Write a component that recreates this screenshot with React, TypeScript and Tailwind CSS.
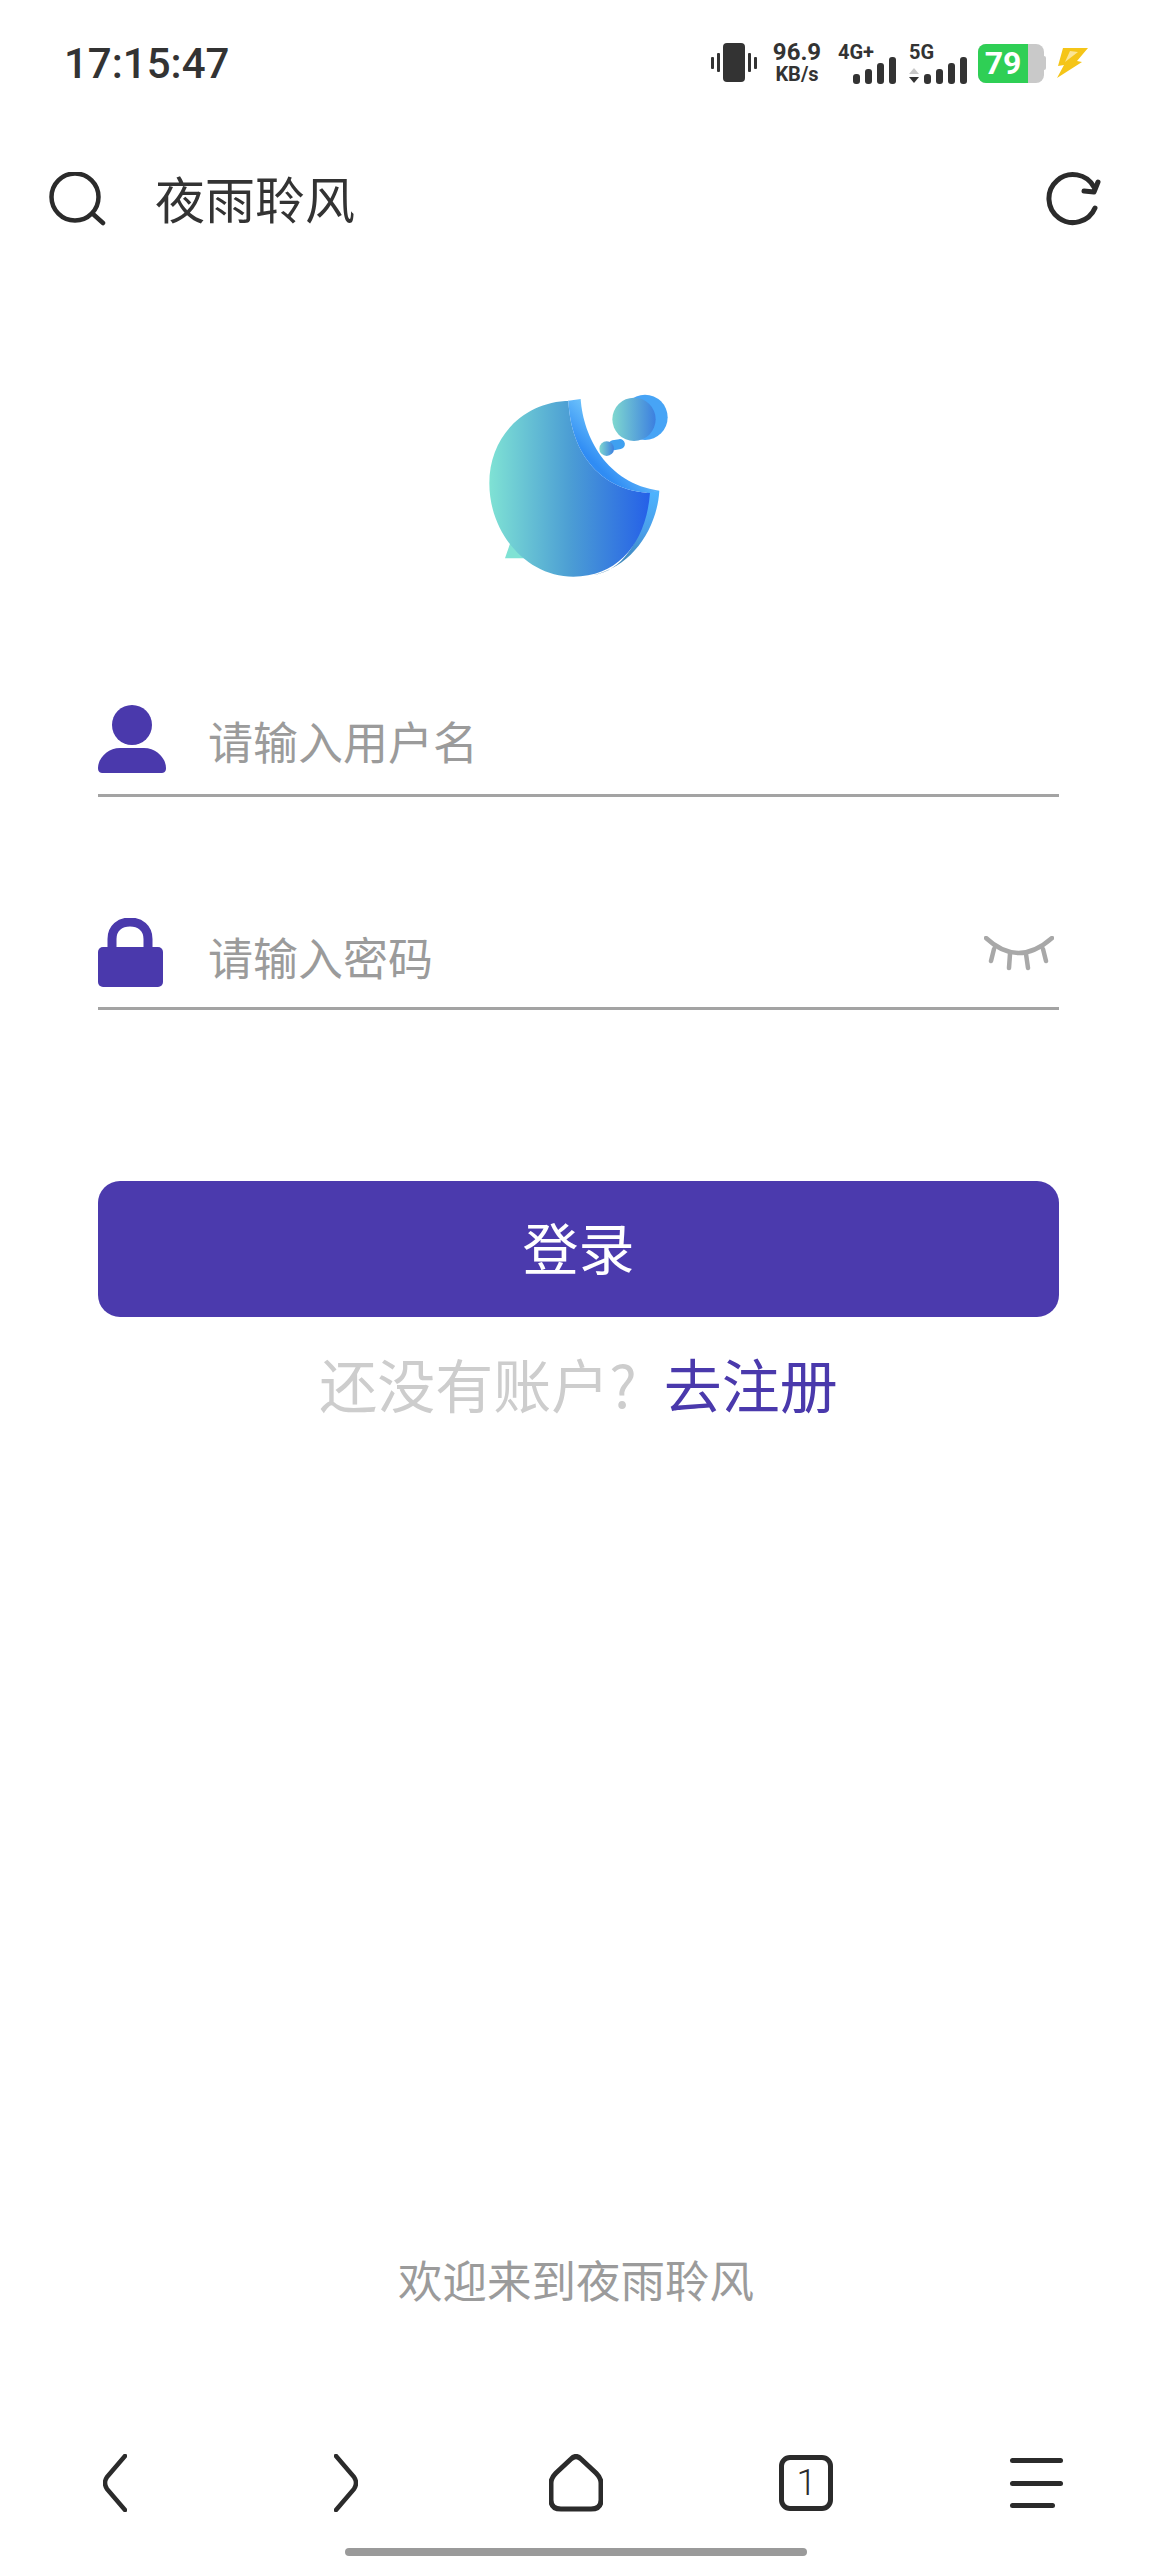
import React from 'react';

const FONT = { fontFamily: '"Noto Sans CJK SC", Roboto, sans-serif' };
const ROBOTO = { fontFamily: 'Roboto, sans-serif' };

const SignalBars = () => (
  <svg width="43" height="27" viewBox="0 0 43 27" fill="#333">
    <rect x="0" y="17" width="7" height="10" rx="3" />
    <rect x="12" y="12" width="7" height="15" rx="3" />
    <rect x="24" y="6" width="7" height="21" rx="3" />
    <rect x="36" y="0" width="7" height="27" rx="3" />
  </svg>
);

const StatusBar = () => (
  <div className="flex h-[126px] items-center justify-between pl-[64px] pr-[63px]">
    <span className="mt-[2px] text-[42px] leading-[48px] font-medium text-[#333]" style={ROBOTO}>17:15:47</span>
    <div className="flex items-center">
      <svg width="46" height="40" viewBox="0 0 46 40" fill="#333">
        <rect x="12" y="0" width="22" height="39" rx="4" />
        <rect x="0" y="14" width="3" height="12" rx="1" />
        <rect x="6" y="10" width="3" height="19" rx="1" />
        <rect x="37" y="10" width="3" height="19" rx="1" />
        <rect x="43" y="14" width="3" height="12" rx="1" />
      </svg>
      <div className="ml-[16px] flex w-[48px] flex-col items-center font-bold text-[#333]" style={ROBOTO}>
        <span className="text-[24px] leading-[22px]">96.9</span>
        <span className="text-[20px] leading-[22px]">KB/s</span>
      </div>
      <div className="relative ml-[17px] h-[42px] w-[58px] text-[#333]">
        <span className="absolute left-0 top-0 text-[20px] leading-[20px] font-bold" style={ROBOTO}>4G+</span>
        <div className="absolute right-0 bottom-0 flex"><SignalBars /></div>
      </div>
      <div className="relative ml-[13px] h-[42px] w-[58px] text-[#333]">
        <span className="absolute left-0 top-0 text-[20px] leading-[20px] font-bold" style={ROBOTO}>5G</span>
        <svg className="absolute left-0 bottom-0" width="10" height="16" viewBox="0 0 10 16">
          <path d="M5 0 L10 6 H0 Z" fill="#c8c8c8" />
          <path d="M5 15 L10 9 H0 Z" fill="#333" />
        </svg>
        <div className="absolute right-0 bottom-0 flex"><SignalBars /></div>
      </div>
      <div className="ml-[11px] flex items-center">
        <div className="h-[39px] w-[66px] overflow-hidden rounded-[8px] bg-[#c9c9c9]">
          <div className="flex h-full w-[50px] items-center justify-center bg-[#2fcf55] text-[32px] leading-none font-bold text-white" style={ROBOTO}>79</div>
        </div>
        <div className="h-[14px] w-[2px] rounded-r-sm bg-[#c9c9c9]" />
      </div>
      <svg className="ml-[11px]" width="32" height="34" viewBox="0 0 32 32" fill="#f5c518">
        <path d="M6 1 H31 L20 14 L25 15 L0 31 L7 18 L1 19 Z" />
        <path d="M13 4 L8 15 L21 5 Z" fill="#fff" opacity="0.55" />
      </svg>
    </div>
  </div>
);

const TopBar = () => (
  <div className="mt-[43px] flex h-[60px] items-center justify-between pl-[48px] pr-[50px]">
    <div className="flex items-center">
      <svg width="58" height="54" viewBox="0 0 58 54" fill="none" stroke="#2b2b2b" strokeWidth="4.5" strokeLinecap="round">
        <circle cx="27" cy="25" r="23.5" />
        <path d="M45 42 L55 51" />
      </svg>
      <span className="mb-[4px] ml-[49px] text-[50px] leading-[60px] text-[#333]">夜雨聆风</span>
    </div>
    <svg width="58" height="56" viewBox="0 0 58 56" fill="none" stroke="#2b2b2b" strokeWidth="5" strokeLinecap="round" strokeLinejoin="round">
      <path d="M51 37 A24 24 0 1 1 50 16" />
      <path d="M54 11 L50 21 L40 20" />
    </svg>
  </div>
);

const Logo = () => (
  <svg width="220" height="220" viewBox="0 0 660 660">
    <defs>
      <linearGradient id="body" x1="0" y1="0" x2="1" y2="0">
        <stop offset="0" stopColor="#7fe2d4" />
        <stop offset="0.5" stopColor="#4c9ed4" />
        <stop offset="1" stopColor="#2560e8" />
      </linearGradient>
      <linearGradient id="rim" x1="1" y1="0" x2="0" y2="1">
        <stop offset="0.3" stopColor="#8adcff" />
        <stop offset="0.7" stopColor="#2f8cf4" />
      </linearGradient>
      <linearGradient id="edge" x1="0" y1="0" x2="0" y2="1">
        <stop offset="0" stopColor="#4eb4ff" />
        <stop offset="0.5" stopColor="#4a9ee8" />
        <stop offset="1" stopColor="#3a7fa8" />
      </linearGradient>
      <linearGradient id="dot" x1="0" y1="0" x2="1" y2="0">
        <stop offset="0" stopColor="#7fd8cf" />
        <stop offset="1" stopColor="#3c7fe0" />
      </linearGradient>
    </defs>
    <path d="M135 565 L152 515 L205 565 Z" fill="#7fe2d4" />
    <path d="M560 366 L598 362 C592 470 520 590 400 615 C 500 600 555 490 560 366 Z" fill="url(#edge)" />
    <path d="M330 92 C190 95 88 200 88 340 C88 490 200 620 340 620 C480 620 560 510 570 368 C450 365 335 280 325 92 Z" fill="url(#body)" />
    <path d="M325 92 L362 87 C370 200 440 340 598 362 L570 368 C450 365 335 280 325 92 Z" fill="url(#rim)" />
    <circle cx="555" cy="142" r="68" fill="#47a4f6" />
    <circle cx="522" cy="148" r="65" fill="url(#dot)" />
    <rect x="445" y="209" width="50" height="30" rx="15" transform="rotate(-10 470 225)" fill="#3fa0f0" />
    <circle cx="440" cy="236" r="22" fill="url(#dot)" />
  </svg>
);

const Field = ({ icon, placeholder, trailing, className, textClass }: { icon: React.ReactNode; placeholder: string; trailing?: React.ReactNode; className?: string; textClass?: string }) => (
  <div className={`flex h-[92px] items-start border-b-[3px] border-[#a3a3a3] ${className ?? ''}`}>
    <div className="flex h-[68px] w-[110px] shrink-0 items-center">{icon}</div>
    <span className={`flex-1 text-[45px] leading-[60px] text-[#9b9b9b] ${textClass ?? ''}`}>{placeholder}</span>
    {trailing}
  </div>
);

const UserIcon = () => (
  <svg width="68" height="68" viewBox="0 0 68 68" fill="#4a39ac">
    <circle cx="34" cy="20" r="20" />
    <path d="M0 63 C0 53 10 43 22 43 H46 C58 43 68 53 68 63 C68 67 66 68 63 68 H5 C2 68 0 67 0 63 Z" />
  </svg>
);

const LockIcon = () => (
  <svg width="65" height="69" viewBox="0 0 65 69" fill="none">
    <path d="M14 32 V21 C14 10 22 4 32 4 C42 4 50 10 50 21 V32" stroke="#4a39ac" strokeWidth="9" />
    <rect x="0" y="29" width="65" height="40" rx="5" fill="#4a39ac" />
  </svg>
);

const EyeIcon = () => (
  <svg width="70" height="36" viewBox="0 0 70 36" fill="none" stroke="#a8a8a8" strokeWidth="4.5" strokeLinecap="round" className="mr-[5px] mt-[18px]">
    <path d="M2 2 Q34 32 68 2" />
    <path d="M10 13 L7 25 M26 18 L25 32 M42 18 L44 32 M59 13 L62 25" />
  </svg>
);

const BottomNav = () => (
  <div className="grid h-[58px] grid-cols-5 items-center justify-items-center">
    <svg width="24" height="58" viewBox="0 0 24 58" fill="none" stroke="#2b2b2b" strokeWidth="4.5" strokeLinecap="round" strokeLinejoin="round">
      <path d="M22 2 L4 23 Q0 29 4 35 L22 56" />
    </svg>
    <svg width="24" height="58" viewBox="0 0 24 58" fill="none" stroke="#2b2b2b" strokeWidth="4.5" strokeLinecap="round" strokeLinejoin="round">
      <path d="M2 2 L20 23 Q24 29 20 35 L2 56" />
    </svg>
    <svg width="54" height="58" viewBox="0 0 54 58" fill="none" stroke="#2b2b2b" strokeWidth="5" strokeLinejoin="round">
      <path d="M22 5 Q27 0 32 5 L47 19 Q52 24 52 29 V46 Q52 55 42 55 H12 Q2 55 2 46 V29 Q2 24 7 19 Z" />
    </svg>
    <div className="flex h-[56px] w-[54px] items-center justify-center rounded-[11px] border-[5px] border-[#2b2b2b] text-[36px] leading-none font-light text-[#2b2b2b]" style={ROBOTO}>1</div>
    <div className="flex h-[50px] w-[53px] flex-col justify-between">
      <div className="h-[5px] w-full rounded-full bg-[#2b2b2b]" />
      <div className="h-[5px] w-full rounded-full bg-[#2b2b2b]" />
      <div className="h-[5px] w-[45px] rounded-full bg-[#2b2b2b]" />
    </div>
  </div>
);

export default function App() {
  return (
    <div className="flex h-[2560px] w-[1152px] flex-col overflow-hidden bg-white" style={FONT}>
      <StatusBar />
      <TopBar />
      <div className="mt-[141px] flex justify-center pr-[12px]">
        <Logo />
      </div>
      <div className="ml-[98px] mr-[93px]">
        <Field className="mt-[115px]" icon={<UserIcon />} placeholder="请输入用户名" textClass="mt-[6px]" />
        <Field className="mt-[121px]" icon={<LockIcon />} placeholder="请输入密码" textClass="mt-[9px]" trailing={<EyeIcon />} />
        <button className="mt-[171px] flex h-[136px] w-full items-center justify-center rounded-[22px] bg-[#4b3aad] pb-[7px] text-[56px] text-white">登录</button>
        <div className="mt-[31px] flex justify-center text-[58px] leading-[70px]">
          <span className="mr-[27px] text-[#cdcdcd]">还没有账户?</span>
          <span className="text-[#4a39ac]">去注册</span>
        </div>
      </div>
      <div className="mt-[833px] text-center text-[44.5px] leading-[56px] text-[#9b9b9b]">欢迎来到夜雨聆风</div>
      <div className="mt-[147px]">
        <BottomNav />
      </div>
      <div className="mx-auto mt-[36px] h-[8px] w-[462px] rounded-full bg-[#9a9a9a]" />
    </div>
  );
}
